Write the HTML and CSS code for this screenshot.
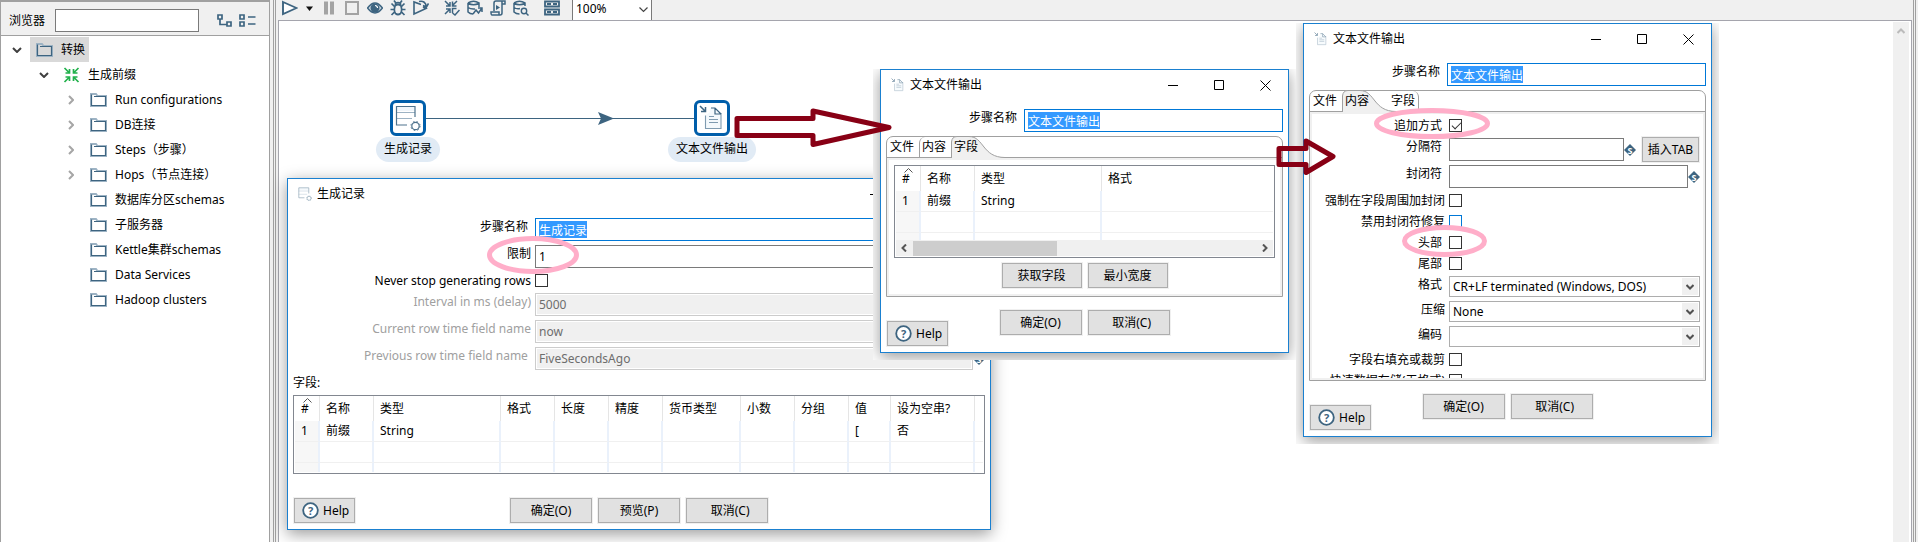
FILE: index.html
```html
<!DOCTYPE html>
<html lang="zh-CN">
<head>
<meta charset="utf-8">
<title>转换 - 生成前缀</title>
<link rel="stylesheet" href="styles.css">
</head>
<body>
<svg class="defs" aria-hidden="true">
  <defs>
    <symbol id="folder" viewBox="0 0 17 14"><path d="M1 13V1h5l1.500 2H16v10z" fill="none" stroke="#9db3c4" stroke-width="2"/><path d="M1.500 12.500v-11M1 12.500h15M15.500 13V3.500H4" fill="none" stroke="#3d6480" stroke-width="1.200"/></symbol>
    <symbol id="down" viewBox="0 0 10 6"><path d="M1 1l4 4 4-4" fill="none" stroke="#404040" stroke-width="2"/></symbol>
    <symbol id="right" viewBox="0 0 6 10"><path d="M1 1l4 4-4 4" fill="none" stroke="#a6a6a6" stroke-width="2"/></symbol>
    <symbol id="rows" viewBox="0 0 26 26"><path d="M1 1h19v5H1z" fill="#f0f6fb"/><path d="M1 7.500h19M1 13.500h16" fill="none" stroke="#9db3c4"/><path d="M20 12V1.500H1.500V20H12" fill="none" stroke="#4f738d" stroke-width="1.200"/><circle cx="20.500" cy="21" r="3.700" fill="#fff" stroke="#4f738d" stroke-width="1.200"/><circle cx="20.500" cy="21" r="4.600" fill="none" stroke="#4f738d" stroke-dasharray="1.500 2.200"/></symbol>
    <symbol id="fileout" viewBox="0 0 26 26"><path d="M7 10v13h15V8l-5-5h-6v4" fill="#f4f9fc"/><path d="M6.500 10.500v13H22V8M10 14.500h9M10 17.500h9M10 11.500h5" fill="none" stroke="#7f9bb0" stroke-width="1.100"/><path d="M22 9l-6-6h-4M16 3v6h6" fill="none" stroke="#3d6480" stroke-width="1.200"/><path d="M1 1l5 5M6.500 2v4.500H2" fill="none" stroke="#3d6480" stroke-width="1.500"/></symbol>
    <symbol id="help" viewBox="0 0 17 17"><circle cx="8.500" cy="8.500" r="7.300" fill="#fff" stroke="#3d6480" stroke-width="1.800"/><text x="8.500" y="12.500" text-anchor="middle" class="glyph" font-size="11" fill="#3d6480">?</text></symbol>
    <symbol id="variable" viewBox="0 0 12 12"><path d="M6 0l6 6-6 6-6-6z" fill="#3d6480"/><text x="6" y="9.500" text-anchor="middle" class="glyph" font-size="9" fill="#fff">S</text></symbol>
    <symbol id="min" viewBox="0 0 11 11"><path d="M0 5.500h10" stroke="#000"/></symbol>
    <symbol id="max" viewBox="0 0 11 11"><path d="M.5.5h9v9h-9z" fill="none" stroke="#000"/></symbol>
    <symbol id="close" viewBox="0 0 11 11"><path d="M.5.500l10 10M10.500.500l-10 10" fill="none" stroke="#000"/></symbol>
    <symbol id="sort" viewBox="0 0 9 5"><path d="M.5 4.500l4-4 4 4" fill="none" stroke="#555"/></symbol>
    <symbol id="inward" viewBox="0 0 16 16"><path d="M1 1l5 5M6 2v4H2M15 1l-5 5M10 2v4h4M1 15l5-5M2 10h4v4M15 15l-5-5M14 10h-4v4" fill="none" stroke="currentColor" stroke-width="1.700"/></symbol>
    <symbol id="tab-curve" viewBox="0 0 54 22"><path d="M.5 22V6Q1 .5 6 .5H18C33 .5 31 21.500 54 21.500V22z" fill="#f0f0f0"/><path d="M.5 22V6Q1 .5 6 .5H18C33 .5 31 21.500 54 21.500" fill="none" stroke="#a0a0a0"/></symbol>
  </defs>
</svg>

<div class="app">
  <aside class="sidebar">
    <div class="sidebar-head">
      <label for="search">浏览器</label>
      <input id="search" class="field search" type="text">
      <div class="sidebar-tools">
        <button class="tool" aria-label="展开"><svg width="15" height="14" viewBox="0 0 15 14"><path d="M1 1h4v4H1zM10 8h4v4h-4zM3 5v5.500h7" fill="#fff" fill-opacity=".1" stroke="#3d6480" stroke-width="1.700"/></svg></button>
        <button class="tool" aria-label="折叠"><svg width="17" height="14" viewBox="0 0 17 14"><path d="M1 1h4v4H1zM1 8h4v4H1zM9 3h7.500M9 10h7.500" fill="none" stroke="#3d6480" stroke-width="1.700"/></svg></button>
      </div>
    </div>
    <ul class="tree">
      <li>
        <div class="row"><span class="twist"><svg width="10" height="6"><use href="#down"/></svg></span><span class="item selected"><svg width="17" height="14"><use href="#folder"/></svg>转换</span></div>
        <ul>
          <li>
            <div class="row"><span class="twist"><svg width="10" height="6"><use href="#down"/></svg></span><span class="item"><svg class="green" width="17" height="16"><use href="#inward"/></svg>生成前缀</span></div>
            <ul>
              <li class="row"><span class="twist"><svg width="6" height="10"><use href="#right"/></svg></span><span class="item"><svg width="17" height="14"><use href="#folder"/></svg>Run configurations</span></li>
              <li class="row"><span class="twist"><svg width="6" height="10"><use href="#right"/></svg></span><span class="item"><svg width="17" height="14"><use href="#folder"/></svg>DB连接</span></li>
              <li class="row"><span class="twist"><svg width="6" height="10"><use href="#right"/></svg></span><span class="item"><svg width="17" height="14"><use href="#folder"/></svg>Steps（步骤）</span></li>
              <li class="row"><span class="twist"><svg width="6" height="10"><use href="#right"/></svg></span><span class="item"><svg width="17" height="14"><use href="#folder"/></svg>Hops（节点连接）</span></li>
              <li class="row"><span class="twist"></span><span class="item"><svg width="17" height="14"><use href="#folder"/></svg>数据库分区schemas</span></li>
              <li class="row"><span class="twist"></span><span class="item"><svg width="17" height="14"><use href="#folder"/></svg>子服务器</span></li>
              <li class="row"><span class="twist"></span><span class="item"><svg width="17" height="14"><use href="#folder"/></svg>Kettle集群schemas</span></li>
              <li class="row"><span class="twist"></span><span class="item"><svg width="17" height="14"><use href="#folder"/></svg>Data Services</span></li>
              <li class="row"><span class="twist"></span><span class="item"><svg width="17" height="14"><use href="#folder"/></svg>Hadoop clusters</span></li>
            </ul>
          </li>
        </ul>
      </li>
    </ul>
  </aside>

  <main class="editor">
    <div class="editor-frame">
      <div class="toolbar">
        <div class="tool-group run">
          <div class="split">
            <button class="tool" aria-label="运行"><svg width="16" height="16" viewBox="0 0 16 16"><path d="M1 2l13.500 6L1 14z" fill="#fff" stroke="#3d6480" stroke-width="1.900"/></svg></button>
            <button class="tool" aria-label="运行选项"><svg width="16" height="16" viewBox="0 0 16 16"><path d="M8 6.500h7L11.500 11z" fill="#111"/></svg></button>
          </div>
          <button class="tool" aria-label="暂停"><svg width="16" height="16" viewBox="0 0 16 16"><path d="M3 1.500h4v13H3zM9 1.500h4v13H9z" fill="#a3a3a3"/></svg></button>
          <button class="tool" aria-label="停止"><svg width="16" height="16" viewBox="0 0 16 16"><path d="M2 2h12v12H2z" fill="none" stroke="#a3a3a3" stroke-width="2"/></svg></button>
          <button class="tool" aria-label="预览"><svg width="16" height="16" viewBox="0 0 16 16"><path d="M.5 8Q8-2 15.500 8 8 18 .5 8z" fill="#c9d5de" stroke="#3d6480" stroke-width="1.500"/><circle cx="8" cy="8" r="4.500" fill="#3d6480"/><path d="M8 5.500A2.500 2.500 0 0 1 10.500 8" fill="none" stroke="#fff" stroke-width="1.200"/></svg></button>
          <button class="tool" aria-label="调试"><svg width="16" height="16" viewBox="0 0 16 16"><path d="M5 6Q8 3 11 6q1.500 5-.5 7.500-2.500 2-5 0Q3.500 11 5 6zM5.500 5Q5 2.500 8 2.500t2.500 2.500M5.500 2.500L4 .5M10.500 2.500L12 .5M4.500 6.500L1.500 3.500M11.500 6.500l3-3M4 9.500H.5M12 9.500h3.500M4.500 12l-3 3M11.500 12l3 3" fill="none" stroke="#3d6480" stroke-width="1.700"/></svg></button>
          <button class="tool" aria-label="重放"><svg width="16" height="16" viewBox="0 0 16 16"><path d="M8 4.500L1 2v12l12-5.500L10 7M6 1.500q6-1.500 7.500 5M10 5.500l3.500 1.500L15.500 3.500" fill="none" stroke="#3d6480" stroke-width="1.600"/></svg></button>
        </div>
        <div class="tool-group">
          <button class="tool" aria-label="校验"><svg width="16" height="16" viewBox="0 0 16 16"><path d="M1 1l5 5M6 2v4H2M13 1L9 5M8.500 1.500v4.500h4M1 14l5-5M2 9h4v4M12.500 8.500H8.500V13M8.500 13l2.500 2 4.500-5" fill="none" stroke="#3d6480" stroke-width="1.500"/></svg></button>
          <button class="tool" aria-label="影响分析"><svg width="16" height="16" viewBox="0 0 16 16"><path d="M1 3v9q2 2 5 2M1 3q5.500-3.500 11 0v4M1 3q5.500 3.500 11 0M1 7.500q3 2 7 1.500M6 14l3-4 2.500 3L15 8M11 8h4v4" fill="none" stroke="#3d6480" stroke-width="1.500"/></svg></button>
          <button class="tool" aria-label="SQL"><svg width="16" height="16" viewBox="0 0 16 16"><path d="M4 11V3q0-2 2-2h9v3h-3v9q0 2-2 2H2q-1 0-1-3h8v3M12 4V1" fill="none" stroke="#3d6480" stroke-width="1.500"/><path d="M6 5l4 2.500L6 10z" fill="#3d6480"/></svg></button>
          <button class="tool" aria-label="浏览数据库"><svg width="16" height="16" viewBox="0 0 16 16"><path d="M1 3v9q2 2 5.500 2M1 3q5.500-3.500 11 0v3M1 3q5.500 3.500 11 0M1 7.500q3 2 6 1" fill="none" stroke="#3d6480" stroke-width="1.500"/><circle cx="11" cy="11" r="2.700" fill="none" stroke="#3d6480" stroke-width="1.400"/><path d="M13 13l2.500 2.500" stroke="#3d6480" stroke-width="1.500"/></svg></button>
        </div>
        <button class="tool" aria-label="结果"><svg width="16" height="16" viewBox="0 0 16 16"><path d="M1 1.500h14v5H1zM1 9.500h14v5H1zM3 4h4M9 4h4M3 12h4M9 12h4" fill="none" stroke="#3d6480" stroke-width="1.800"/></svg></button>
        <div class="zoom">
          <select aria-label="缩放"><option>100%</option></select>
          <svg width="9" height="6" viewBox="0 0 9 6"><path d="M.5.500l4 4 4-4" fill="none" stroke="#444" stroke-width="1.200"/></svg>
        </div>
      </div>
      <div class="canvas">
        <div class="surface">
          <svg class="hop" aria-hidden="true"><path d="M146 97.500H416" stroke="#3d6480"/><path d="M319 91l16 6.500-16 6.500 3-6.500z" fill="#3d6480"/></svg>
          <div class="node node-rows"><div class="node-box"><svg width="26" height="26"><use href="#rows"/></svg></div><div class="node-name">生成记录</div></div>
          <div class="node node-file"><div class="node-box"><svg width="26" height="26"><use href="#fileout"/></svg></div><div class="node-name">文本文件输出</div></div>
        </div>
        <div class="vscroll"><svg width="8" height="6" viewBox="0 0 8 6"><path d="M.5 5L4 1.500 7.500 5" fill="none" stroke="#bbb" stroke-width="2"/></svg></div>
      </div>
    </div>
  </main>
</div>

<section class="window win-rows" aria-label="生成记录">
  <header class="titlebar"><svg width="14" height="14"><use href="#rows"/></svg><h2>生成记录</h2>
    <button aria-label="最小化"><svg width="11" height="11"><use href="#min"/></svg></button><button aria-label="最大化"><svg width="11" height="11"><use href="#max"/></svg></button><button aria-label="关闭"><svg width="11" height="11"><use href="#close"/></svg></button></header>
  <div class="form">
    <div class="line"><label for="r-name">步骤名称&nbsp;</label><span class="field focus"><input id="r-name" class="picked" value="生成记录"></span><span class="gutter"></span></div>
    <div class="line"><label for="r-limit">限制</label><input id="r-limit" class="field" value="1"><span class="gutter"></span></div>
    <div class="line"><label for="r-never">Never stop generating rows</label><input id="r-never" type="checkbox"></div>
    <div class="line off"><label for="r-int">Interval in ms (delay)</label><input id="r-int" class="field" value="5000" disabled><svg class="gutter" width="12" height="12"><use href="#variable"/></svg></div>
    <div class="line off"><label for="r-cur">Current row time field name</label><input id="r-cur" class="field" value="now" disabled><svg class="gutter" width="12" height="12"><use href="#variable"/></svg></div>
    <div class="line off"><label for="r-prev">Previous row time field name&nbsp;</label><input id="r-prev" class="field" value="FiveSecondsAgo" disabled><svg class="gutter" width="12" height="12"><use href="#variable"/></svg></div>
  </div>
  <div class="caption">字段:</div>
  <div class="grid-box">
    <table>
      <colgroup><col class="c-num"><col class="c-s"><col class="c-type"><col class="c-s"><col class="c-s"><col class="c-s"><col class="c-cur"><col class="c-s"><col class="c-s"><col class="c-val"><col class="c-null"><col></colgroup>
      <thead><tr><th>#<svg class="sort" width="9" height="5"><use href="#sort"/></svg></th><th>名称</th><th>类型</th><th>格式</th><th>长度</th><th>精度</th><th>货币类型</th><th>小数</th><th>分组</th><th>值</th><th>设为空串?</th><th></th></tr></thead>
      <tbody>
        <tr><td>1</td><td>前缀</td><td>String</td><td></td><td></td><td></td><td></td><td></td><td></td><td>[</td><td>否</td><td></td></tr>
        <tr><td></td><td></td><td></td><td></td><td></td><td></td><td></td><td></td><td></td><td></td><td></td><td></td></tr>
        <tr class="cut"><td></td><td></td><td></td><td></td><td></td><td></td><td></td><td></td><td></td><td></td><td></td><td></td></tr>
      </tbody>
    </table>
  </div>
  <footer class="actions wide">
    <button class="btn help"><svg width="17" height="17"><use href="#help"/></svg>Help</button>
    <div class="btns"><button class="btn">确定(O)</button><button class="btn">预览(P)</button><button class="btn">&nbsp;&nbsp;取消(C)</button></div>
  </footer>
</section>

<div class="shot shot-fields">
<section class="window" aria-label="文本文件输出">
  <header class="titlebar"><svg width="14" height="14"><use href="#fileout"/></svg><h2>文本文件输出</h2>
    <button aria-label="最小化"><svg width="11" height="11"><use href="#min"/></svg></button><button aria-label="最大化"><svg width="11" height="11"><use href="#max"/></svg></button><button aria-label="关闭"><svg width="11" height="11"><use href="#close"/></svg></button></header>
  <div class="form">
    <div class="line"><label for="f-name">步骤名称&nbsp;</label><span class="field focus"><input id="f-name" class="picked" value="文本文件输出"></span></div>
  </div>
  <div class="tabs">
    <div class="tab-strip"><button>文件</button><button>内容</button><button class="on"><svg width="54" height="22"><use href="#tab-curve"/></svg><span>字段</span></button></div>
    <div class="tab-body">
      <div class="tab-page">
        <div class="grid-box">
          <table>
            <colgroup><col class="c-num"><col class="c-s"><col class="c-type"><col></colgroup>
            <thead><tr><th>#<svg class="sort" width="9" height="5"><use href="#sort"/></svg></th><th>名称</th><th>类型</th><th>格式</th></tr></thead>
            <tbody>
              <tr><td>1</td><td>前缀</td><td>String</td><td></td></tr>
              <tr><td></td><td></td><td></td><td></td></tr>
              <tr class="cut"><td></td><td></td><td></td><td></td></tr>
            </tbody>
          </table>
          <div class="hscroll"><svg width="6" height="8" viewBox="0 0 6 8"><path d="M5 .5L1.500 4 5 7.500" fill="none" stroke="#555" stroke-width="2"/></svg><span class="track"><span class="thumb"></span></span><svg width="6" height="8" viewBox="0 0 6 8"><path d="M1 .5L4.500 4 1 7.500" fill="none" stroke="#555" stroke-width="2"/></svg></div>
        </div>
        <div class="btns"><button class="btn">获取字段</button><button class="btn">最小宽度</button></div>
      </div>
    </div>
  </div>
  <footer class="actions">
    <button class="btn help"><svg width="17" height="17"><use href="#help"/></svg>Help</button>
    <div class="btns"><button class="btn">确定(O)</button><button class="btn">&nbsp;&nbsp;取消(C)</button></div>
  </footer>
</section>
</div>

<div class="shot shot-content">
<section class="window" aria-label="文本文件输出">
  <header class="titlebar"><svg width="14" height="14"><use href="#fileout"/></svg><h2>文本文件输出</h2>
    <button aria-label="最小化"><svg width="11" height="11"><use href="#min"/></svg></button><button aria-label="最大化"><svg width="11" height="11"><use href="#max"/></svg></button><button aria-label="关闭"><svg width="11" height="11"><use href="#close"/></svg></button></header>
  <div class="form">
    <div class="line"><label for="c-name">步骤名称&nbsp;</label><span class="field focus"><input id="c-name" class="picked" value="文本文件输出"></span></div>
  </div>
  <div class="tabs">
    <div class="tab-strip"><button>文件</button><button class="on"><svg width="54" height="22"><use href="#tab-curve"/></svg><span>内容</span></button><button class="after">字段</button></div>
    <div class="tab-body">
      <div class="options">
        <div class="line"><label for="o1">追加方式&nbsp;</label><input id="o1" type="checkbox" checked></div>
        <div class="line"><label for="o2">分隔符&nbsp;</label><input id="o2" class="field" value=""><svg class="gutter" width="12" height="12"><use href="#variable"/></svg><button class="btn insert">插入TAB</button></div>
        <div class="line"><label for="o3">封闭符&nbsp;</label><input id="o3" class="field" value=""><svg class="gutter" width="12" height="12"><use href="#variable"/></svg></div>
        <div class="line"><label for="o4">强制在字段周围加封闭</label><input id="o4" type="checkbox"></div>
        <div class="line"><label for="o5">禁用封闭符修复</label><input id="o5" class="hot" type="checkbox"></div>
        <div class="line"><label for="o6">头部&nbsp;</label><input id="o6" type="checkbox"></div>
        <div class="line"><label for="o7">尾部&nbsp;</label><input id="o7" type="checkbox"></div>
        <div class="line"><label for="o8">格式&nbsp;</label><span class="combo"><select id="o8"><option>CR+LF terminated (Windows, DOS)</option></select><span class="drop"><svg width="8" height="6" viewBox="0 0 8 6"><path d="M.5 1L4 4.500 7.500 1" fill="none" stroke="#505050" stroke-width="2"/></svg></span></span></div>
        <div class="line"><label for="o9">压缩</label><span class="combo"><select id="o9"><option>None</option></select><span class="drop"><svg width="8" height="6" viewBox="0 0 8 6"><path d="M.5 1L4 4.500 7.500 1" fill="none" stroke="#505050" stroke-width="2"/></svg></span></span></div>
        <div class="line"><label for="o10">编码&nbsp;</label><span class="combo"><select id="o10"><option></option></select><span class="drop"><svg width="8" height="6" viewBox="0 0 8 6"><path d="M.5 1L4 4.500 7.500 1" fill="none" stroke="#505050" stroke-width="2"/></svg></span></span></div>
        <div class="line"><label for="o11">字段右填充或裁剪</label><input id="o11" type="checkbox"></div>
        <div class="line"><label for="o12">快速数据存储(无格式)</label><input id="o12" type="checkbox"></div>
      </div>
    </div>
  </div>
  <footer class="actions">
    <button class="btn help"><svg width="17" height="17"><use href="#help"/></svg>Help</button>
    <div class="btns"><button class="btn">确定(O)</button><button class="btn">&nbsp;&nbsp;取消(C)</button></div>
  </footer>
</section>
</div>

<svg class="marks" aria-hidden="true">
  <g fill="none" stroke="#880015" stroke-width="5" stroke-linejoin="round"><path d="M737 118.500H813V111L889 127.500 813 144.500V135.500H737z"/><path d="M1279 148.500H1306V141L1333 156.500 1306 172.500V164.500H1279z"/></g>
  <g fill="none" stroke="#ffaec9" stroke-width="5"><ellipse cx="533" cy="255" rx="43.500" ry="16.500"/><ellipse cx="1432" cy="123.500" rx="55.500" ry="13"/><ellipse cx="1444.500" cy="241" rx="40" ry="13.500"/></g>
</svg>
</body>
</html>
```
FILE: styles.css
```css
* { box-sizing: border-box; }

body {
  margin: 0;
  background: #f0f0f0;
  color: #000;
  overflow: hidden;
}

body, button, input, select {
  font: 12px/16px "Noto Sans", "Noto Sans CJK SC", sans-serif;
}

svg { display: block; flex: none; }
button { padding: 0; border: 0; background: none; color: inherit; }
.defs { position: absolute; width: 0; height: 0; }
.glyph { font-family: "Noto Sans", sans-serif; font-weight: 700; }

/* Application frame */
.app { display: flex; gap: 3px; height: 100vh; padding-right: 2px; }

.sidebar {
  flex: 0 0 270px;
  border: solid #a0a0a0;
  border-width: 0 1px;
  background: #fff;
}
.sidebar-head {
  display: flex;
  align-items: center;
  padding: 7px 13px 3px 8px;
  border-top: 2px solid #a0a0a0;
  border-bottom: 1px solid #a0a0a0;
  background: #f0f0f0;
}
.sidebar-head .search { flex: 0 0 144px; margin-left: 10px; }
.sidebar-tools { display: flex; gap: 7px; margin-left: auto; }
.tool { display: block; }

.tree, .tree ul { margin: 0; padding: 0; list-style: none; }
.tree { padding: 1px 0 0 2px; }
.tree ul { padding-left: 27px; }
.row { display: flex; height: 25px; }
.twist { display: flex; flex: 0 0 27px; align-items: center; justify-content: center; }
.item { display: flex; align-items: center; gap: 8px; padding: 0 4px 0 6px; }
.selected { background: #d9d9d9; }
.green { color: #22b14c; }

.editor { flex: 1; padding: 0 1px; border: solid #a0a0a0; border-width: 0 1px; }
.editor-frame {
  display: flex;
  flex-direction: column;
  height: 100%;
  padding: 0 1px 0 2px;
  border: solid #a0a0a0;
  border-width: 0 1px;
}
.toolbar { display: flex; align-items: flex-start; gap: 15px; height: 20px; padding-left: 4px; }
.tool-group { display: flex; gap: 7px; }
.split { display: flex; }
.zoom { position: relative; margin-left: -3px; }
.zoom select {
  appearance: none;
  display: block;
  width: 80px;
  height: 20px;
  padding: 0 3px 3px;
  border: solid #7a7a7a;
  border-width: 0 1px;
  border-radius: 0;
  background: #fff;
}
.zoom svg { position: absolute; right: 4px; top: 7px; }

.canvas {
  display: flex;
  flex: 1;
  border: solid #a5a5ad;
  border-width: 1px 1px 0;
  background: #fff;
}
.surface { position: relative; flex: 1; }
.vscroll { display: flex; flex: 0 0 18px; justify-content: center; margin-top: 1px; padding-top: 6px; border-right: 2px solid #fff; background: #f0f0f0; }
.hop { position: absolute; left: 0; top: 0; width: 100%; height: 100%; }
.node { position: absolute; top: 79px; display: flex; flex-direction: column; align-items: center; gap: 1px; }
.node-rows { left: 97px; }
.node-file { left: 389px; }
.node-box {
  display: flex;
  align-items: center;
  justify-content: center;
  width: 36px;
  height: 36px;
  border: 3px solid #005eaa;
  border-radius: 6px;
  background: #fff;
}
.node-name { padding: 4px 8px 5px; border-radius: 13px; background: #e1ebf5; }

/* Windows */
.window {
  border: 1px solid #1a80d0;
  background: #fff;
  box-shadow: 0 4px 15px rgba(0, 0, 0, .4);
}
.win-rows { position: absolute; left: 287px; top: 178px; width: 704px; }
.shot { position: absolute; width: 423px; padding: 0 7px 7px; overflow: hidden; background: #fff; }
.shot-fields { left: 873px; top: 69px; }
.shot-content { left: 1296px; top: 23px; }

.titlebar { display: flex; align-items: center; height: 30px; padding-left: 10px; }
.titlebar > svg { opacity: .65; }
.titlebar h2 { flex: 1; margin: 0 0 0 5px; font-size: 12px; font-weight: 400; }
.titlebar button { display: flex; justify-content: center; width: 46px; }

.form, .options { display: flex; flex-direction: column; gap: 4px; }
.form { padding: 9px 5px 0; }
.line { display: flex; align-items: center; min-height: 17px; }
.line label { flex: 0 0 134px; align-self: flex-start; margin-right: 4px; line-height: 17px; text-align: right; white-space: nowrap; }
.win-rows .line label { flex-basis: 238px; }
.off label { color: #a0a0a0; }
.gutter { flex: none; width: 12px; }

.field {
  flex: 1;
  min-width: 0;
  height: 23px;
  padding: 0 3px;
  border: 1px solid #7a7a7a;
  border-radius: 0;
  background: #fff;
  outline: 0;
}
.field:disabled { border-color: #ccc; background: #f0f0f0; color: #6d6d6d; box-shadow: inset 0 0 0 1px #fff; }
.focus { display: flex; align-items: center; border-color: #0078d7; }
.picked {
  field-sizing: content;
  height: 17px;
  padding: 0;
  border: 0;
  background: #3399ff;
  color: #fff;
  outline: 0;
}

input[type="checkbox"] {
  appearance: none;
  width: 13px;
  height: 13px;
  margin: 0;
  border: 1px solid #333;
  background: #fff;
}
input[type="checkbox"]:checked::before {
  content: "";
  display: block;
  width: 8px;
  height: 4px;
  margin: 2px 0 0 2px;
  border: solid #333;
  border-width: 0 0 1px 1px;
  transform: rotate(-45deg);
}
input[type="checkbox"].hot { border-color: #0078d7; }

.combo { position: relative; flex: 1; }
.combo select {
  appearance: none;
  display: block;
  width: 100%;
  height: 21px;
  padding: 0 3px;
  border: 1px solid #adadad;
  border-radius: 0;
  background: #fff;
}
.drop {
  position: absolute;
  inset: 2px 2px 2px auto;
  display: flex;
  align-items: center;
  justify-content: center;
  width: 16px;
  background: #f0f0f0;
}

.btn {
  min-width: 82px;
  height: 25px;
  border: 1px solid #adadad;
  background: #e1e1e1;
  box-shadow: 0 0 0 1px #f0f0f0;
}
.btns { display: flex; justify-content: center; gap: 6px; }
.help { display: flex; align-items: center; justify-self: start; gap: 4px; min-width: 61px; padding: 0 5px 0 7px; }
.insert { min-width: 57px; margin: 0 1px 0 6px; }
.line:has(.insert) { height: 23px; }

.caption { padding: 5px 5px 4px; line-height: 16px; }
.win-rows .grid-box { margin: 0 5px; }
.grid-box { padding: 0 1px 1px; border: 1px solid #828790; background: #fff; }
table { width: 100%; border-spacing: 0; table-layout: fixed; }
th, td { height: 21px; padding: 0 0 0 6px; text-align: left; font-weight: 400; white-space: nowrap; }
th { position: relative; height: 25px; border-right: 1px solid #e5e5e5; }
td { border-right: 2px solid #eaf1fb; border-bottom: 1px solid #f0f0f0; }
th:last-child, td:last-child { border-right: 0; }
td:first-child { background: #f7f7f7; }
.cut td { height: 9px; border-bottom: 0; }
.tab-page .cut td { height: 7px; }
.sort { position: absolute; left: 8px; top: 2px; }
.c-num { width: 25px; }
.c-s { width: 54px; }
.c-type { width: 127px; }
.c-cur { width: 78px; }
.c-val { width: 42px; }
.c-null { width: 84px; }

.actions { display: grid; grid-template-columns: 1fr auto 1fr; align-items: end; padding: 13px 6px 6px; }
.actions .btns { padding-bottom: 11px; }
.wide { padding-top: 24px; }
.actions.wide .btns { padding-bottom: 0; }

/* Tab folder */
.tabs { margin: 4px 5px 0; border: 1px solid #a0a0a0; border-radius: 7px 7px 0 0; }
.tab-strip { display: flex; height: 20px; }
.tab-strip button { position: relative; width: 32px; padding-left: 2px; text-align: left; border-left: 1px solid #a0a0a0; border-top-left-radius: 6px; }
.tab-strip button:first-child { border-left-color: transparent; }
.tab-strip .on { border-color: transparent; }
.on svg { position: absolute; left: -1px; top: -1px; }
.on span { position: relative; }
.tab-strip .after { width: 45px; padding-left: 17px; border: 0; border-right: 1px solid #a0a0a0; border-radius: 0 6px 0 0; }
.tab-body { padding: 2px; border-top: 1px solid #a0a0a0; background: #f0f0f0; }
.tab-page { padding: 5px 5px 6px; background: #fff; }
.tab-page .btns { margin-top: 5px; }
.tab-page .btn { min-width: 80px; }
.hscroll { display: flex; align-items: center; height: 16px; padding: 0 5px; background: #f0f0f0; }
.track { flex: 1; height: 15px; margin: 0 6px; }
.thumb { display: block; width: 42%; height: 100%; background: #cdcdcd; }
.options { height: 264px; padding: 3px 3px 0 0; overflow: hidden; background: #fff; }
.options .line { flex: none; }
.options .line label { flex-basis: 133px; }

.marks { position: absolute; left: 0; top: 0; width: 100%; height: 100%; pointer-events: none; }
```
